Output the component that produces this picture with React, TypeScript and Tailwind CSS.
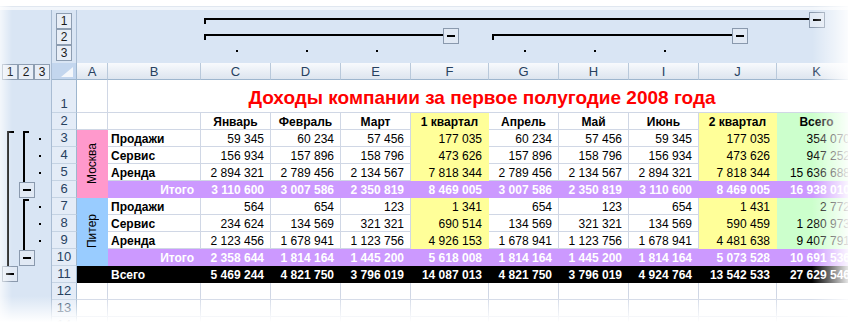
import React from "react";

const GRID = "border-[#d0d7e5]";

type Fill = "white" | "yellow" | "green" | "purple" | "black";

const fillClass: Record<Fill, string> = {
  white: "bg-white border-[#d0d7e5]",
  yellow: "bg-[#ffff99] border-[#ffff99]",
  green: "bg-[#ccffcc] border-[#ccffcc]",
  purple: "bg-[#cc99ff] border-[#cc99ff] text-white font-bold",
  black: "bg-black border-black text-white font-bold",
};

const months = ["Январь", "Февраль", "Март", "1 квартал", "Апрель", "Май", "Июнь", "2 квартал", "Всего"];

// C..K fill for ordinary rows
const colFill: Fill[] = ["white", "white", "white", "yellow", "white", "white", "white", "yellow", "green"];

const moscow = [
  ["Продажи", "59 345", "60 234", "57 456", "177 035", "60 234", "57 456", "59 345", "177 035", "354 070"],
  ["Сервис", "156 934", "157 896", "158 796", "473 626", "157 896", "158 796", "156 934", "473 626", "947 252"],
  ["Аренда", "2 894 321", "2 789 456", "2 134 567", "7 818 344", "2 789 456", "2 134 567", "2 894 321", "7 818 344", "15 636 688"],
];
const moscowTotal = ["3 110 600", "3 007 586", "2 350 819", "8 469 005", "3 007 586", "2 350 819", "3 110 600", "8 469 005", "16 938 010"];

const piter = [
  ["Продажи", "564", "654", "123", "1 341", "654", "123", "654", "1 431", "2 772"],
  ["Сервис", "234 624", "134 569", "321 321", "690 514", "134 569", "321 321", "134 569", "590 459", "1 280 973"],
  ["Аренда", "2 123 456", "1 678 941", "1 123 756", "4 926 153", "1 678 941", "1 123 756", "1 678 941", "4 481 638", "9 407 791"],
];
const piterTotal = ["2 358 644", "1 814 164", "1 445 200", "5 618 008", "1 814 164", "1 445 200", "1 814 164", "5 073 528", "10 691 536"];

const grand = ["5 469 244", "4 821 750", "3 796 019", "14 087 013", "4 821 750", "3 796 019", "4 924 764", "13 542 533", "27 629 546"];

function RowNum({ n, tall }: { n: number; tall?: boolean }) {
  return (
    <div
      className={`flex justify-center bg-[#e4ecf7] border-r border-b border-r-[#9eb6ce] border-b-[#c5d3e3] text-[13px] text-[#27415f] ${
        tall ? "items-end leading-[16px]" : "items-center leading-[16px]"
      }`}
    >
      {n}
    </div>
  );
}

function Cell({
  children,
  fill = "white",
  align = "right",
  bold,
}: {
  children?: React.ReactNode;
  fill?: Fill;
  align?: "left" | "right" | "center";
  bold?: boolean;
}) {
  const a = align === "right" ? "justify-end pr-[6px]" : align === "left" ? "justify-start pl-[3px]" : "justify-center";
  return (
    <div
      className={`flex items-end overflow-hidden whitespace-nowrap border-r border-b text-[12px] leading-[14px] ${a} ${fillClass[fill]} ${
        bold ? "font-bold" : ""
      }`}
    >
      {children}
    </div>
  );
}

function LevelBtn({ n }: { n: number }) {
  return (
    <div className="w-[16px] h-[16px] border border-[#8d9db1] bg-[#e8eef7] flex items-center justify-center text-[12px] leading-none text-[#1b1b1b]">
      {n}
    </div>
  );
}

function ColOutline() {
  const dots = [159, 229, 299, 447, 517, 587];
  return (
    <svg width="770" height="53" className="block">
      {/* level 1 */}
      <rect x="127" y="8" width="605" height="2" fill="#000" />
      <rect x="127" y="8" width="2" height="6" fill="#000" />
      <rect x="732.5" y="2.5" width="15" height="15" fill="#e1e9f4" stroke="#8a99ad" />
      <rect x="736" y="9" width="8" height="2" fill="#000" />
      {/* level 2 */}
      <rect x="127" y="24" width="239" height="2" fill="#000" />
      <rect x="127" y="24" width="2" height="6" fill="#000" />
      <rect x="366.5" y="18.5" width="15" height="15" fill="#e1e9f4" stroke="#8a99ad" />
      <rect x="370" y="25" width="8" height="2" fill="#000" />
      <rect x="415" y="24" width="240" height="2" fill="#000" />
      <rect x="415" y="24" width="2" height="6" fill="#000" />
      <rect x="655.5" y="18.5" width="15" height="15" fill="#e1e9f4" stroke="#8a99ad" />
      <rect x="659" y="25" width="8" height="2" fill="#000" />
      {dots.map((x) => (
        <rect key={x} x={x} y="40" width="2" height="2" fill="#000" />
      ))}
    </svg>
  );
}

function RowOutline() {
  const dots = [59, 76, 93, 127, 144, 161];
  return (
    <svg width="52" height="242" className="block">
      {/* level 1 */}
      <rect x="7" y="51" width="2" height="135" fill="#000" />
      <rect x="7" y="51" width="7" height="2" fill="#000" />
      <rect x="2.5" y="186.5" width="15" height="15" fill="#e1e9f4" stroke="#8a99ad" />
      <rect x="6" y="193" width="8" height="2" fill="#000" />
      {/* level 2 */}
      <rect x="23" y="51" width="2" height="51" fill="#000" />
      <rect x="23" y="51" width="6" height="2" fill="#000" />
      <rect x="19.5" y="102.5" width="15" height="15" fill="#e1e9f4" stroke="#8a99ad" />
      <rect x="23" y="109" width="8" height="2" fill="#000" />
      <rect x="23" y="119" width="2" height="51" fill="#000" />
      <rect x="23" y="119" width="6" height="2" fill="#000" />
      <rect x="19.5" y="170.5" width="15" height="15" fill="#e1e9f4" stroke="#8a99ad" />
      <rect x="23" y="177" width="8" height="2" fill="#000" />
      {dots.map((y) => (
        <rect key={y} x="39" y={y - 1} width="2" height="2" fill="#000" />
      ))}
    </svg>
  );
}

function Group({
  city,
  cityFill,
  rows,
  total,
  start,
}: {
  city: string;
  cityFill: string;
  rows: string[][];
  total: string[];
  start: number;
}) {
  return (
    <>
      {rows.map((r, i) => (
        <React.Fragment key={i}>
          <RowNum n={start + i} />
          {i === 0 && (
            <div className={`row-span-4 flex items-center justify-center border-r border-b ${cityFill}`}>
              <span className="[writing-mode:vertical-rl] rotate-180 text-[12px] leading-none">{city}</span>
            </div>
          )}
          <Cell align="left" bold>
            {r[0]}
          </Cell>
          {r.slice(1).map((v, j) => (
            <Cell key={j} fill={colFill[j]}>
              {v}
            </Cell>
          ))}
        </React.Fragment>
      ))}
      <RowNum n={start + 3} />
      <Cell fill="purple">Итого</Cell>
      {total.map((v, j) => (
        <Cell key={j} fill="purple">
          {v}
        </Cell>
      ))}
    </>
  );
}

export default function App() {
  const letters = ["A", "B", "C", "D", "E", "F", "G", "H", "I", "J", "K"];

  return (
    <div className="relative w-[848px] h-[322px] overflow-hidden bg-white font-['Liberation_Sans',Arial,sans-serif] text-black">
      <div className="h-[6px] bg-white" />
      <div className="h-px bg-[#e0e7f0]" />
      <div className="h-[3px] bg-[#f2f6fb]" />

      <div className="flex">
        {/* row outline panel */}
        <div className="w-[52px] shrink-0 flex flex-col bg-[#d9e5f4] border-r border-[#a9bcd3]">
          <div className="h-[53px]" />
          <div className="h-[17px] flex items-start pl-[2px] pt-px">
            <LevelBtn n={1} />
            <LevelBtn n={2} />
            <LevelBtn n={3} />
          </div>
          <RowOutline />
        </div>

        <div className="flex-1 min-w-0 overflow-hidden">
          {/* column outline strip */}
          <div className="h-[53px] flex bg-[#d9e5f4]">
            <div className="w-[25px] shrink-0 border-r border-[#a9bcd3] flex flex-col items-center pt-[3px]">
              <LevelBtn n={1} />
              <LevelBtn n={2} />
              <LevelBtn n={3} />
            </div>
            <ColOutline />
          </div>

          <div className="grid w-[805px] grid-cols-[25px_31px_93px_70px_70px_70px_78px_70px_70px_70px_78px_80px] grid-rows-[17px_33px_repeat(12,17px)]">
            {/* corner + column headers */}
            <div className="relative bg-[#c3d6ee] border-r border-b border-[#9eb6ce]">
              <svg width="12" height="10" className="absolute right-[3px] bottom-[2px]">
                <polygon points="12,0 12,10 0,10" fill="#f4f7fb" />
              </svg>
            </div>
            {letters.map((l) => (
              <div
                key={l}
                className="flex items-center justify-center bg-linear-to-b from-[#f8fafd] to-[#dde5ef] border-r border-b border-r-[#b9c9db] border-b-[#9eb6ce] text-[13px] leading-none text-[#27415f]"
              >
                {l}
              </div>
            ))}

            {/* row 1: title */}
            <RowNum n={1} tall />
            <Cell />
            <div className={`col-span-10 flex items-end justify-center pb-[4px] border-r border-b ${GRID} bg-white`}>
              <span className="text-[19px] leading-[20px] font-bold text-[#ff0000]">
                Доходы компании за первое полугодие 2008 года
              </span>
            </div>

            {/* row 2: headers */}
            <RowNum n={2} />
            <Cell />
            <Cell />
            {months.map((m, j) => (
              <Cell key={m + j} fill={colFill[j]} align="center" bold>
                {m}
              </Cell>
            ))}

            <Group city="Москва" cityFill="bg-[#ff99cc] border-[#ff99cc]" rows={moscow} total={moscowTotal} start={3} />
            <Group city="Питер" cityFill="bg-[#99ccff] border-[#99ccff]" rows={piter} total={piterTotal} start={7} />

            {/* row 11: grand total */}
            <RowNum n={11} />
            <Cell fill="black" />
            <Cell fill="black" align="left">
              Всего
            </Cell>
            {grand.map((v, j) => (
              <Cell key={j} fill="black">
                {v}
              </Cell>
            ))}

            {[12, 13, 14].map((n) => (
              <React.Fragment key={n}>
                <RowNum n={n} />
                {letters.map((l) => (
                  <Cell key={l} />
                ))}
              </React.Fragment>
            ))}
          </div>
        </div>
      </div>

      {/* soft fades at the edges */}
      <div className="pointer-events-none absolute top-0 left-0 h-full w-[12px] bg-linear-to-r from-white/70 to-white/0" />
      <div className="pointer-events-none absolute top-0 right-0 h-full w-[36px] bg-linear-to-r from-white/0 to-white/90" />
      <div className="pointer-events-none absolute bottom-0 left-0 w-full h-[26px] bg-linear-to-b from-white/0 to-white" />
    </div>
  );
}
